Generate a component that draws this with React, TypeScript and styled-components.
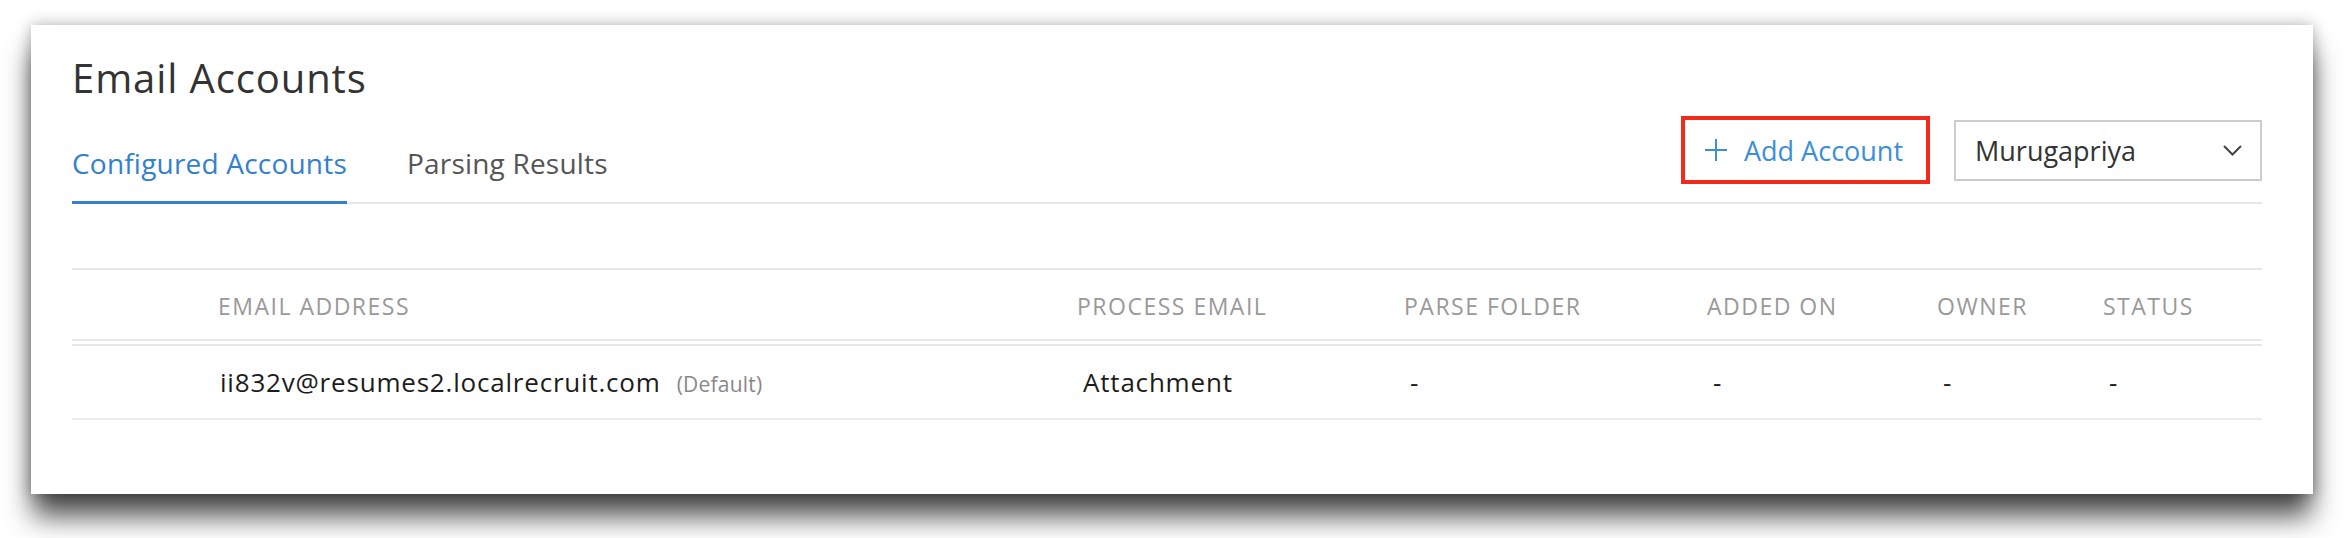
import React, { FunctionComponent } from "react";
import styled, { createGlobalStyle } from "styled-components";

const GlobalStyle = createGlobalStyle`
  html, body {
    margin: 0;
    padding: 0;
    background: #ffffff;
  }
  body {
    min-height: 100vh;
    font-family: "Open Sans", Lato, "Liberation Sans", sans-serif;
    color: #333333;
  }
`;

const Card = styled.div`
  margin: 25px 35px 0 31px;
  height: 469px;
  box-sizing: border-box;
  background: #ffffff;
  padding: 30px 51px 0 41px;
  box-shadow: 0 24px 26px -2px rgba(0, 0, 0, 0.7), 0 0 14px rgba(0, 0, 0, 0.3);
`;

const Title = styled.h1`
  margin: 0;
  font-size: 40px;
  line-height: 46px;
  letter-spacing: 0.9px;
  font-weight: 400;
  color: #333333;
`;

const TabBar = styled.div`
  display: flex;
  align-items: flex-end;
  justify-content: space-between;
  border-bottom: 2px solid #e6e6e6;
  margin-top: 6px;
`;

const Tabs = styled.div`
  display: flex;
  gap: 60px;
`;

const Tab = styled.div<{ $active?: boolean }>`
  font-size: 28px;
  line-height: 32px;
  letter-spacing: 0.2px;
  padding: 40px 0 22px;
  margin-bottom: -2px;
  color: ${(p) => (p.$active ? "#3480d0" : "#555555")};
  border-bottom: 3px solid ${(p) => (p.$active ? "#3480d0" : "transparent")};
`;

const Controls = styled.div`
  display: flex;
  align-items: center;
  gap: 24px;
  margin-bottom: 18px;
`;

const AddButton = styled.button`
  display: flex;
  align-items: center;
  gap: 17px;
  width: 249px;
  height: 68px;
  box-sizing: border-box;
  padding: 0 0 0 20px;
  border: 4px solid #f2291b;
  background: #ffffff;
  color: #3b8fd9;
  font-family: inherit;
  font-size: 27px;
  cursor: pointer;
`;

const Select = styled.div`
  display: flex;
  align-items: center;
  justify-content: space-between;
  width: 308px;
  height: 61px;
  box-sizing: border-box;
  padding: 0 18px 0 19px;
  border: 2px solid #cccccc;
  font-size: 27px;
  color: #333333;
`;

const Table = styled.div`
  margin-top: 64px;
`;

const Row = styled.div<{ $head?: boolean }>`
  display: grid;
  grid-template-columns: 146px 859px 327px 303px 230px 166px 1fr;
  align-items: center;
  height: ${(p) => (p.$head ? 69 : 72)}px;
  border-top: 2px solid #e6e6e6;
  border-bottom: 2px solid ${(p) => (p.$head ? "#e6e6e6" : "#ececec")};
  margin-top: ${(p) => (p.$head ? 0 : 3)}px;
`;

const HeadCell = styled.div`
  font-size: 23px;
  letter-spacing: 1.5px;
  color: #999999;
  text-transform: uppercase;
  padding-top: 2px;
`;

const Cell = styled.div<{ $indent?: number }>`
  font-size: 26px;
  letter-spacing: 0.8px;
  color: #1c1c1c;
  padding-left: ${(p) => p.$indent ?? 6}px;
`;

const Default = styled.span`
  font-size: 21px;
  letter-spacing: 0.2px;
  color: #888888;
  margin-left: 16px;
`;

const PlusIcon: FunctionComponent = () => (
  <svg width="22" height="22" viewBox="0 0 22 22" fill="none">
    <path d="M11 0v22M0 11h22" stroke="#3b8fd9" strokeWidth="2" />
  </svg>
);

const Chevron: FunctionComponent = () => (
  <svg width="19" height="11" viewBox="0 0 19 11" fill="none">
    <path d="M1 1l8.5 8.5L18 1" stroke="#444444" strokeWidth="2" />
  </svg>
);

const headers = [
  "",
  "Email Address",
  "Process Email",
  "Parse Folder",
  "Added On",
  "Owner",
  "Status",
];

const App: FunctionComponent = () => (
  <>
    <GlobalStyle />
    <Card>
      <Title>Email Accounts</Title>
      <TabBar>
        <Tabs>
          <Tab $active>Configured Accounts</Tab>
          <Tab>Parsing Results</Tab>
        </Tabs>
        <Controls>
          <AddButton>
            <PlusIcon />
            Add Account
          </AddButton>
          <Select>
            Murugapriya
            <Chevron />
          </Select>
        </Controls>
      </TabBar>
      <Table>
        <Row $head>
          {headers.map((h, i) => (
            <HeadCell key={i}>{h}</HeadCell>
          ))}
        </Row>
        <Row>
          <Cell />
          <Cell $indent={2}>
            ii832v@resumes2.localrecruit.com
            <Default>(Default)</Default>
          </Cell>
          <Cell>Attachment</Cell>
          <Cell>-</Cell>
          <Cell>-</Cell>
          <Cell>-</Cell>
          <Cell>-</Cell>
        </Row>
      </Table>
    </Card>
  </>
);

export default App;
